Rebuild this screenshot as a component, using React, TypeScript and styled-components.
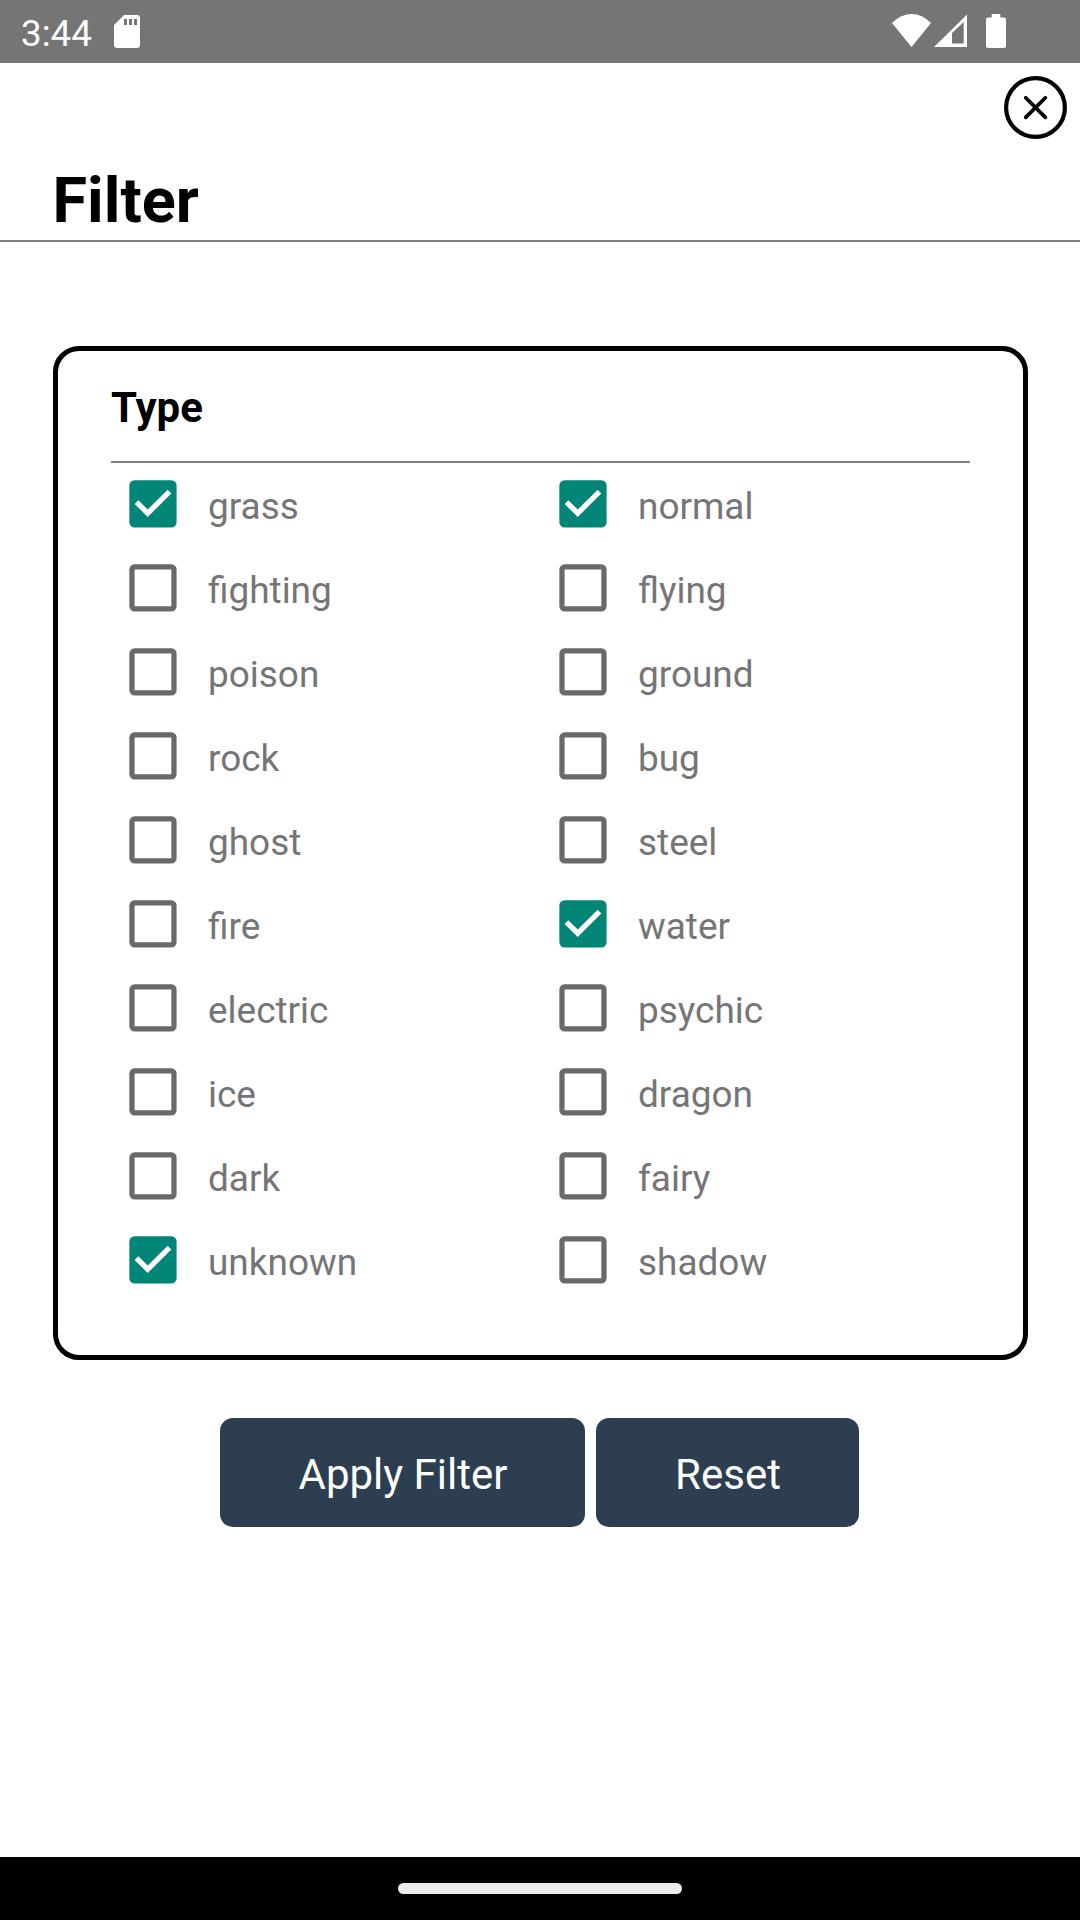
import React, { useState } from "react";
import styled, { createGlobalStyle } from "styled-components";

const GlobalStyle = createGlobalStyle`
  *, *::before, *::after { box-sizing: border-box; }
  body { margin: 0; background: #fff; font-family: Roboto, "Noto Sans", sans-serif; }
`;

const Screen = styled.div`
  width: 1080px;
  height: 1920px;
  display: flex;
  flex-direction: column;
  overflow: hidden;
  background: #fff;
`;

const StatusBar = styled.header`
  height: 63px;
  flex: none;
  display: flex;
  justify-content: space-between;
  background: #757575;
  color: #fff;
  padding: 0 68px 0 21px;
`;

const StatusGroup = styled.div`
  display: flex;
  align-items: flex-start;
`;

const Clock = styled.span`
  font-size: 36.75px;
  line-height: 43px;
  margin: 12px 21px 0 0;
  width: 72px;
  white-space: nowrap;
`;

const TopRow = styled.div`
  flex: none;
  height: 76px;
  display: flex;
  justify-content: flex-end;
  padding: 13px 12px 0 0;
`;

const CloseButton = styled.button`
  display: block;
  width: 64px;
  height: 64px;
  padding: 0;
  border: 0;
  background: none;
`;

const Title = styled.h1`
  flex: none;
  height: 103px;
  margin: 0;
  padding: 25px 52.5px 0;
  border-bottom: 2px solid #808080;
  font-size: 63px;
  line-height: 74px;
  font-weight: 700;
  color: #000;
`;

const Card = styled.section`
  flex: none;
  width: 975px;
  height: 1014px;
  margin: 104px 0 0 53px;
  padding: 32px 53px 0;
  border: 5px solid #000;
  border-radius: 26px;
`;

const CardTitle = styled.h2`
  height: 80px;
  margin: 0;
  border-bottom: 2px solid #808080;
  font-size: 42px;
  line-height: 49px;
  font-weight: 700;
  color: #000;
`;

const Options = styled.div`
  display: grid;
  grid-template-columns: 430px 1fr;
  grid-auto-rows: 84px;
  padding-left: 10px;
`;

const Option = styled.label`
  display: flex;
  align-items: flex-start;
  padding-top: 9px;
`;

const OptionText = styled.span`
  margin: 13px 0 0 24px;
  font-size: 36.95px;
  line-height: 43px;
  color: #757575;
`;

const HiddenInput = styled.input`
  position: absolute;
  opacity: 0;
  pointer-events: none;
`;

const Actions = styled.div`
  flex: none;
  display: flex;
  justify-content: center;
  gap: 11px;
  margin-top: 58px;
  padding-right: 1px;
`;

const ActionButton = styled.button<{ $width: number }>`
  width: ${(p) => p.$width}px;
  height: 109px;
  padding: 4px 0 0 1px;
  border: 0;
  border-radius: 13px;
  background: #2c3e50;
  color: #fff;
  font-family: inherit;
  font-size: 42px;
  line-height: 49px;
`;

const NavBar = styled.footer`
  flex: none;
  height: 63px;
  margin-top: auto;
  padding-top: 26px;
  display: flex;
  justify-content: center;
  background: #000;
`;

const NavPill = styled.div`
  width: 284px;
  height: 11px;
  border-radius: 5.5px;
  background: #ebebeb;
`;

const SdIcon = () => (
  <svg width="26" height="63" viewBox="114 0 26 63" fill="#fff">
    <path fillRule="evenodd" d="M124 15H137Q140 15 140 18V45Q140 48 137 48H117Q114 48 114 45V25ZM124 19V25H127V19ZM129 19V25H132V19ZM134 19V25H137V19Z" />
  </svg>
);

const StatusIcons = () => (
  <svg width="120" height="63" viewBox="892 0 120 63" fill="#fff">
    <path d="M892 23Q901 14 911.5 14T931 23L911.5 47Z" />
    <path fillRule="evenodd" d="M934 47L967 14.5V47ZM952 33V43.5H963.7V22Z" />
    <path d="M991.7 14H1000.3V17.5H1004Q1006 17.5 1006 19.5V46Q1006 48 1004 48H988Q986 48 986 46V19.5Q986 17.5 988 17.5H991.7Z" />
  </svg>
);

const CloseIcon = () => (
  <svg width="64" height="64" viewBox="1004 76 64 64" fill="none" stroke="#000">
    <circle cx="1035.5" cy="107.5" r="29.4" strokeWidth="4.2" />
    <path d="M1025.7 97.7L1045.4 117.4M1045.4 97.7L1025.7 117.4" strokeWidth="3.7" strokeLinecap="round" />
  </svg>
);

const CheckIcon = ({ checked }: { checked: boolean }) => (
  <svg width="63" height="63" viewBox="-0.18 -0.15 24 24">
    {checked ? (
      <>
        <rect x="3" y="3" width="18" height="18" rx="2" fill="#008577" />
        <path d="M10 17L5 12L6.41 10.59L10 14.17L17.59 6.58L19 8Z" fill="#fff" />
      </>
    ) : (
      <rect x="4" y="4" width="16" height="16" rx="1" fill="none" stroke="#696969" strokeWidth="2" />
    )}
  </svg>
);

const TYPES = [
  "grass", "normal", "fighting", "flying", "poison", "ground", "rock", "bug", "ghost", "steel",
  "fire", "water", "electric", "psychic", "ice", "dragon", "dark", "fairy", "unknown", "shadow",
];

export default function App() {
  const [selected, setSelected] = useState<string[]>(["grass", "normal", "water", "unknown"]);
  const toggle = (type: string) =>
    setSelected((s) => (s.includes(type) ? s.filter((t) => t !== type) : [...s, type]));

  return (
    <Screen>
      <GlobalStyle />
      <StatusBar>
        <StatusGroup>
          <Clock>3:44</Clock>
          <SdIcon />
        </StatusGroup>
        <StatusGroup>
          <StatusIcons />
        </StatusGroup>
      </StatusBar>
      <TopRow>
        <CloseButton aria-label="Close">
          <CloseIcon />
        </CloseButton>
      </TopRow>
      <Title>Filter</Title>
      <Card>
        <CardTitle>Type</CardTitle>
        <Options>
          {TYPES.map((type) => (
            <Option key={type}>
              <HiddenInput type="checkbox" checked={selected.includes(type)} onChange={() => toggle(type)} />
              <CheckIcon checked={selected.includes(type)} />
              <OptionText>{type}</OptionText>
            </Option>
          ))}
        </Options>
      </Card>
      <Actions>
        <ActionButton $width={365}>Apply Filter</ActionButton>
        <ActionButton $width={263} onClick={() => setSelected([])}>Reset</ActionButton>
      </Actions>
      <NavBar>
        <NavPill />
      </NavBar>
    </Screen>
  );
}
